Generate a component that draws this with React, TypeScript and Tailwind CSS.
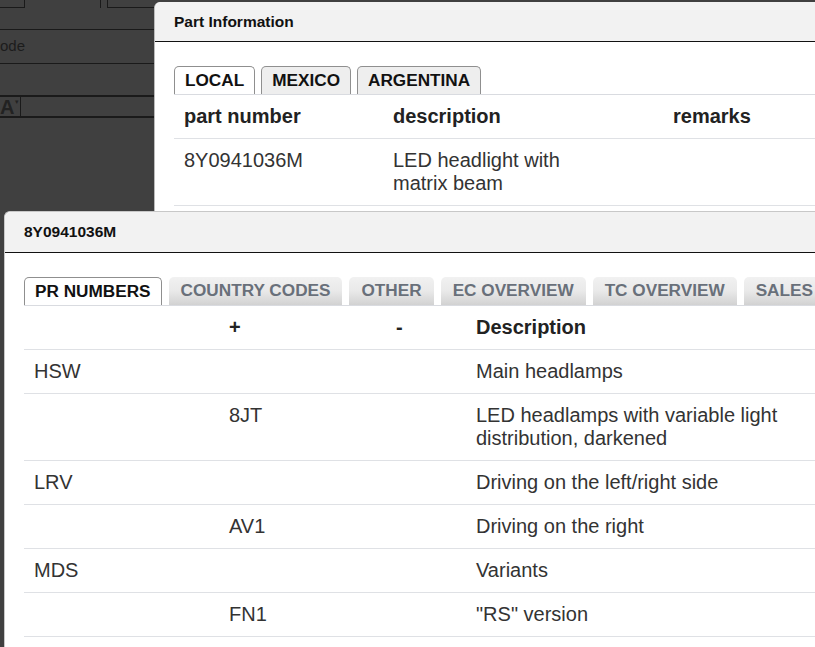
const font = { fontFamily: '"Liberation Sans", Arial, sans-serif' };

const PART_TABS = ["LOCAL", "MEXICO", "ARGENTINA"];
const DETAIL_TABS = ["PR NUMBERS", "COUNTRY CODES", "OTHER", "EC OVERVIEW", "TC OVERVIEW", "SALES"];

const PR_ROWS: [string, string, string, string][] = [
  ["HSW", "", "", "Main headlamps"],
  ["", "8JT", "", "LED headlamps with variable light distribution, darkened"],
  ["LRV", "", "", "Driving on the left/right side"],
  ["", "AV1", "", "Driving on the right"],
  ["MDS", "", "", "Variants"],
  ["", "FN1", "", "\"RS\" version"],
  ["", "", "", ""],
];

function DialogHeader({ title, tall }: { title: string; tall?: boolean }) {
  return (
    <div
      className={[
        "flex items-center rounded-t-[6px] border-b border-[#111] bg-[#f2f2f2] px-[19px]",
        tall ? "h-[41px]" : "h-[40px]",
      ].join(" ")}
    >
      <span className="text-[15.5px] font-bold text-[#111]">{title}</span>
    </div>
  );
}

export default function App() {
  return (
    <div className="relative h-[647px] w-[815px] overflow-hidden bg-[#404040]" style={font}>
      {/* background form behind the dialogs */}
      <div className="flex w-[154px] flex-col">
        <div className="flex h-[8px]">
          <div className="w-[25px] border-r border-b border-[#1a1a1a]" />
          <div className="w-[75px]" />
          <div className="w-[8px] border-x border-[#1a1a1a]" />
          <div className="flex-1 border-b border-[#1a1a1a]" />
        </div>
        <div className="h-[22px] border-b border-[#1a1a1a]" />
        <div className="flex h-[34px] items-center border-b border-[#1a1a1a]">
          <span className="text-[15px] text-[#1c1c1c]">ode</span>
        </div>
        <div className="h-[33px] border-b-2 border-[#1a1a1a]" />
        <div className="flex h-[21px] border-b-2 border-[#1a1a1a]">
          <div className="relative flex w-[21px] items-center border-r border-[#1a1a1a]">
            <span className="text-[20px] font-bold leading-none text-[#222]">A</span>
            <span className="absolute top-[1px] right-[1px] text-[7px] leading-none text-[#222]">▾</span>
          </div>
        </div>
      </div>

      {/* Part Information dialog */}
      <div className="absolute top-[2px] left-[154px] h-[300px] w-[720px] rounded-t-[6px] border-l border-[#bbb] bg-white">
        <DialogHeader title="Part Information" />
        <div className="pt-[24px] pr-[20px] pl-[19px]">
          <div className="flex gap-[6px] border-b border-[#d9dbe0]">
            {PART_TABS.map((t, i) => (
              <div
                key={t}
                className={[
                  "flex h-[28px] items-center rounded-t-[5px] border border-b-0 border-[#8f8f8f] px-[10px] text-[17.2px] font-bold text-[#111]",
                  i === 0 ? "bg-white" : "bg-[#eeeeee]",
                ].join(" ")}
              >
                {t}
              </div>
            ))}
          </div>
          <div className="grid grid-cols-[209px_280px_1fr] border-b border-[#dfe1e5] text-[20px] leading-[23px] font-bold text-[#222]">
            <div className="p-[10px]">part number</div>
            <div className="p-[10px]">description</div>
            <div className="p-[10px]">remarks</div>
          </div>
          <div className="grid grid-cols-[209px_280px_1fr] border-b border-[#dfe1e5] text-[20px] leading-[23px] text-[#333]">
            <div className="p-[10px]">8Y0941036M</div>
            <div className="p-[10px]">
              <div className="max-w-[190px]">LED headlight with matrix beam</div>
            </div>
            <div className="p-[10px]"></div>
          </div>
        </div>
      </div>

      {/* Part detail dialog */}
      <div className="absolute top-[211px] left-[4px] h-[480px] w-[880px] rounded-t-[6px] border-t border-l border-[#c8c8c8] bg-white">
        <DialogHeader title="8Y0941036M" tall />
        <div className="pt-[24px] pr-[20px] pl-[19px]">
          <div className="flex gap-[7px] border-b border-[#d9dbe0]">
            {DETAIL_TABS.map((t, i) =>
              i === 0 ? (
                <div
                  key={t}
                  className="flex h-[28px] shrink-0 items-center rounded-t-[5px] border border-b-0 border-[#8f8f8f] bg-white px-[10px] text-[17.2px] font-bold text-[#111]"
                >
                  {t}
                </div>
              ) : (
                <div
                  key={t}
                  className="flex h-[28px] shrink-0 items-center rounded-t-[5px] bg-linear-to-b from-[#f1f1f1] via-[#e9e9e9] to-[#d2d2d2] px-[12px] text-[17.2px] font-bold text-[#69707a]"
                >
                  {t}
                </div>
              )
            )}
          </div>
          <div className="grid grid-cols-[195px_167px_80px_1fr] border-b border-[#dfe1e5] text-[20px] leading-[23px] font-bold text-[#222]">
            <div className="p-[10px]"></div>
            <div className="p-[10px]">+</div>
            <div className="p-[10px]">-</div>
            <div className="p-[10px]">Description</div>
          </div>
          {PR_ROWS.map((r, i) => (
            <div
              key={i}
              className="grid grid-cols-[195px_167px_80px_1fr] border-b border-[#dfe1e5] text-[20px] leading-[23px] text-[#333]"
            >
              <div className="min-h-[43px] p-[10px]">{r[0]}</div>
              <div className="p-[10px]">{r[1]}</div>
              <div className="p-[10px]">{r[2]}</div>
              <div className="w-[330px] p-[10px]">{r[3]}</div>
            </div>
          ))}
        </div>
      </div>
    </div>
  );
}
